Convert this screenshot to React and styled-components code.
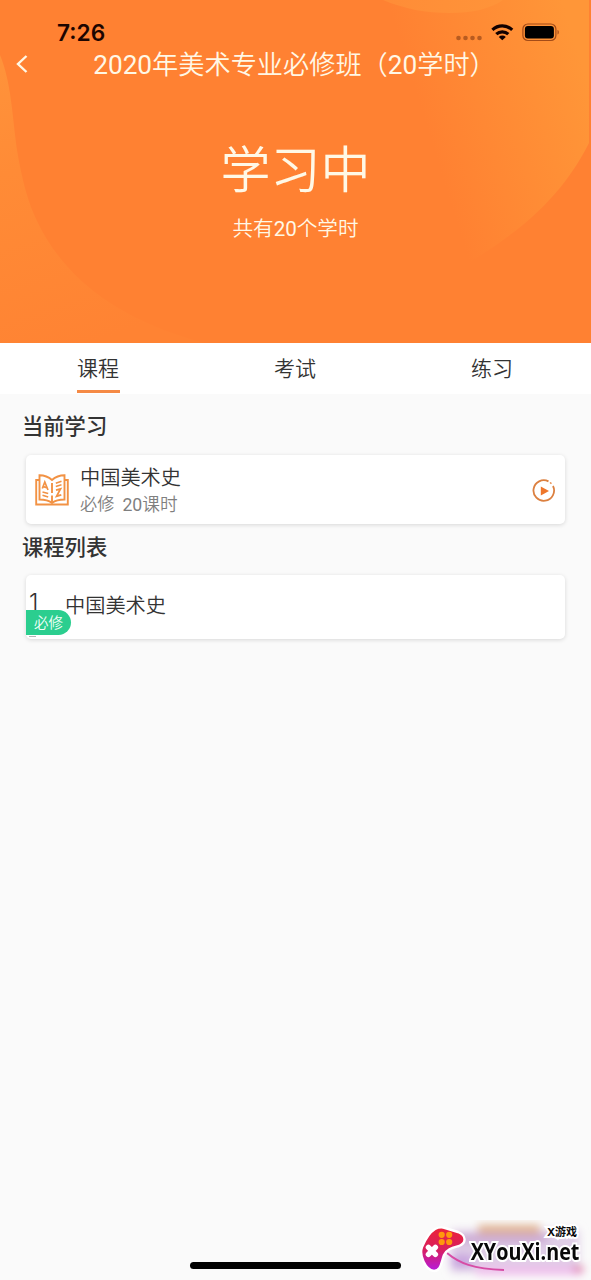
import React, { useState } from "react";
import styled, { createGlobalStyle } from "styled-components";

const GlobalStyle = createGlobalStyle`
  * {
    box-sizing: border-box;
  }

  body {
    margin: 0;
    background-color: #fafafa;
    color: #333;
    font-family: Roboto, "Noto Sans CJK SC", sans-serif;
    font-weight: 350;
  }
`;

const Screen = styled.div`
  position: relative;
  display: flex;
  flex-direction: column;
  height: 1280px;
  overflow: hidden;
`;

const Header = styled.header`
  position: relative;
  height: 343px;
  background-color: #ff8132;
  color: #fff8e6;
`;

const Waves = styled.svg`
  position: absolute;
  top: 0;
  left: 0;
`;

const HeaderContent = styled.div`
  position: relative;
  display: flex;
  flex-direction: column;
`;

const StatusBar = styled.div`
  display: flex;
  justify-content: space-between;
  height: 46px;
  padding: 18px 31px 0 57px;
  color: #1c0500;
`;

const Time = styled.span`
  font-family: Inter, sans-serif;
  font-size: 22.7px;
  font-weight: 600;
  line-height: 29px;
`;

const NavBar = styled.div`
  display: grid;
  grid-template-columns: 44px 1fr 46px;
  align-items: center;
  height: 38px;
`;

const BackButton = styled.button`
  display: flex;
  padding: 0 0 2px 15px;
  border: 0;
  background: none;
  color: inherit;
`;

const Title = styled.h1`
  margin: 0;
  font-size: 26.2px;
  font-weight: 350;
  line-height: 36px;
  text-align: center;
  white-space: nowrap;
`;

const Digits = styled.span`
  font-weight: 400;
`;

const Status = styled.div`
  margin-top: 51px;
  font-size: 50px;
  font-weight: 350;
  line-height: 72px;
  text-align: center;
`;

const Hours = styled.div`
  margin-top: 7px;
  font-size: 20.6px;
  line-height: 30px;
  text-align: center;
`;

const Tabs = styled.nav`
  display: flex;
  height: 51px;
  background-color: #fff;
`;

const Tab = styled.button`
  display: flex;
  flex: 1;
  flex-direction: column;
  align-items: center;
  padding: 10px 1px 0 0;
  border: 0;
  background: none;
  color: #333;
  font-family: inherit;
  font-size: 21px;
  font-weight: 350;
  line-height: 32px;

  &::after {
    content: "";
    width: 43px;
    height: 3px;
    margin-top: 5px;
    background-color: ${props => (props.$active ? "#f58a45" : "transparent")};
  }
`;

const Content = styled.main`
  padding: 17px 26px 0;
`;

const SectionTitle = styled.h2`
  margin: 0 0 0 -4px;
  font-size: 21.3px;
  font-weight: 500;
  line-height: 32px;
`;

const Card = styled.section`
  position: relative;
  display: flex;
  align-items: center;
  height: ${props => props.$height}px;
  margin: ${props => props.$margin};
  border-radius: 5px;
  background-color: #fff;
  box-shadow: 0 1px 4px rgba(0, 0, 0, 0.14);
`;

const BookIcon = styled.svg`
  margin-left: 9px;
`;

const CourseInfo = styled.div`
  flex: 1;
  margin-left: 11px;
  padding-top: 2px;
`;

const CourseName = styled.div`
  font-size: 20.2px;
  line-height: 28px;
`;

const CourseMeta = styled.div`
  display: flex;
  align-items: flex-end;
  gap: 8px;
  color: #7f7f7f;
  font-size: 17.7px;
  line-height: 26px;
`;

const Requirement = styled.span`
  padding-bottom: 2px;
  font-size: 17.2px;
  line-height: 24px;
`;

const PlayIcon = styled.svg`
  margin: 2px 9px 0 0;
`;

const IndexedName = styled.div`
  display: flex;
  align-items: center;
  padding-bottom: 3px;
`;

const Index = styled.span`
  width: 39px;
  padding: 0 0 5px 3px;
  font-family: Inter, sans-serif;
  font-size: 24px;
  font-weight: 300;
  line-height: 30px;
`;

const RequiredTag = styled.span`
  position: absolute;
  bottom: 4px;
  left: 0;
  width: 45px;
  height: 25px;
  padding-top: 1px;
  border-radius: 0 13px 13px 0;
  background-color: #2bce8f;
  color: #f0fff8;
  font-size: 14.5px;
  line-height: 25px;
  text-align: center;

  &::after {
    content: "";
    position: absolute;
    bottom: -2px;
    left: 3px;
    width: 7px;
    height: 1px;
    background-color: #b5b5b5;
  }
`;

const HomeIndicator = styled.div`
  position: absolute;
  bottom: 11px;
  left: 190px;
  width: 211px;
  height: 7px;
  border-radius: 4px;
  background-color: #000;
`;

const Watermark = styled.div`
  position: absolute;
  right: 0;
  bottom: 0;
  display: flex;
  flex-direction: column;
  align-items: flex-end;
  width: 175px;
  height: 60px;
  padding: 5px 12px 0 0;
`;

const WatermarkArt = styled.svg`
  position: absolute;
  top: 0;
  left: 0;
`;

const WatermarkText = styled.div`
  position: relative;
  padding-right: ${props => props.$indent}px;
  color: #080808;
  font-family: ${props => props.$font}, sans-serif;
  font-size: ${props => props.$size}px;
  font-weight: 700;
  line-height: ${props => props.$line}px;
  white-space: nowrap;
  transform: scaleX(${props => props.$stretch});
  transform-origin: right;
  -webkit-text-stroke: 4px #fff;
  paint-order: stroke fill;
`;

function HeaderWaves() {
  return (
    <Waves width="591" height="343" viewBox="0 0 591 343">
      <defs>
        <linearGradient id="right" x1="440" y1="170" x2="600" y2="120" gradientUnits="userSpaceOnUse">
          <stop offset="0" stopColor="#ff9638" stopOpacity="0" />
          <stop offset="1" stopColor="#ff9638" />
        </linearGradient>
        <linearGradient id="left" x1="0" y1="70" x2="90" y2="343" gradientUnits="userSpaceOnUse">
          <stop offset="0" stopColor="#ff923a" />
          <stop offset="0.35" stopColor="#ff8b36" />
          <stop offset="1" stopColor="#ff8333" />
        </linearGradient>
        <linearGradient id="top" x1="380" y1="0" x2="510" y2="0" gradientUnits="userSpaceOnUse">
          <stop offset="0" stopColor="#ff8c37" />
          <stop offset="1" stopColor="#ff9439" />
        </linearGradient>
      </defs>
      <path d="M370 0H589V143C565 190 520 250 370 310Z" fill="url(#right)" />
      <path d="M383 0C405 9 425 13 450 13C472 13 490 9 503 0Z" fill="url(#top)" />
      <path d="M0 55C11 82 12 112 17 150C22 180 28 203 38 223C62 272 110 318 205 343H0Z" fill="url(#left)" />
    </Waves>
  );
}

function StatusIcons() {
  return (
    <svg width="106" height="26" viewBox="0 0 106 26">
      <g fill="#b85b20">
        <circle cx="4.5" cy="20" r="2.3" />
        <circle cx="11.5" cy="20" r="2.3" />
        <circle cx="18.5" cy="20" r="2.3" />
        <circle cx="25.5" cy="20" r="2.3" />
      </g>
      <g fill="none" stroke="#100" strokeWidth="3.2">
        <path d="M38.4 11.9a14.4 14.4 0 0 1 19.8 0" />
        <path d="M42.3 16.2a8.7 8.7 0 0 1 12 0" />
      </g>
      <path d="M44.8 18.9a5 5 0 0 1 7 0l-3.5 3.4z" fill="#100" />
      <rect x="68.9" y="6" width="33" height="16.5" rx="5" fill="none" stroke="#a34b17" strokeWidth="1.2" />
      <rect x="70.9" y="8" width="29" height="12.5" rx="3" fill="#000" />
      <path d="M103.6 12c1.4.5 1.4 4 0 4.5z" fill="#8f3a10" />
    </svg>
  );
}

function Book() {
  return (
    <BookIcon width="34" height="32" viewBox="0 0 34 32" fill="none" stroke="#f29244" strokeWidth="1.9">
      <path d="M4.5 6H1.2V30.5H32.8V6H29.5" />
      <path d="M17 6C13.5 2.8 9 1.2 4.5 1.2V25.5C9.5 25.5 13.5 26.3 17 29C20.5 26.3 24.5 25.5 29.5 25.5V1.2C25 1.2 20.5 2.8 17 6Z" />
      <path d="M17 9V19M17 21.5V28" />
      <path d="M7.3 14.5L9.8 8L13 16M8.4 12.6L11.8 13.7" strokeWidth="1.7" />
      <path d="M7.5 18L13.2 19.5M7.5 21.2L13.2 22.9M20.8 9.3L26.5 7.2M20.8 12.6L26.5 10.8" strokeWidth="1.6" />
      <path d="M21 16.2L25.5 14.9L21.6 22.2L26.3 20.9" strokeWidth="1.8" />
    </BookIcon>
  );
}

function Play() {
  return (
    <PlayIcon width="24" height="24" viewBox="0 0 24 24">
      <path d="M16.5 2.4A10.3 10.3 0 1 0 21 7" fill="none" stroke="#dc8040" strokeWidth="1.8" />
      <path d="M18 3.5L19.5 4.7" stroke="#e78a48" strokeWidth="1.5" />
      <path d="M8.8 7.4L17 12L8.8 16.6Z" fill="#ee762b" />
    </PlayIcon>
  );
}

function SiteMark() {
  return (
    <Watermark>
      <WatermarkArt width="175" height="60" viewBox="0 0 175 60">
        <defs>
          <filter id="soft" x="-20%" y="-40%" width="140%" height="180%">
            <feGaussianBlur stdDeviation="4" />
          </filter>
          <linearGradient id="pad" x1="0" y1="0" x2="0" y2="1">
            <stop offset="0" stopColor="#ec2338" />
            <stop offset="0.5" stopColor="#d9205d" />
            <stop offset="1" stopColor="#b51be0" />
          </linearGradient>
        </defs>
        <g filter="url(#soft)">
          <rect x="35" y="10" width="128" height="42" fill="#dfcee6" />
          <rect x="62" y="5" width="62" height="9" fill="#dfb08e" />
          <rect x="42" y="15" width="90" height="8" fill="#c9a5d2" />
          <rect x="60" y="46" width="105" height="9" fill="#efbdec" />
          <rect x="35" y="34" width="22" height="14" fill="#c9a6df" />
          <rect x="158" y="46" width="9" height="6" fill="#dd6a9c" />
        </g>
        <path d="M31 33C43 43 57 49 88 50" fill="none" stroke="#d74ca5" strokeWidth="2" />
        <path
          d="M6 27C9 20 14 12 19 9C23 7 26 7 29 8L42 12C50 15 51 23 43 26C36 28 31 29 28 35C25 43 25 51 18 51C9 50 3 35 6 27Z"
          fill="url(#pad)"
          stroke="#fff"
          strokeWidth="2.4"
        />
        <g fill="#ff980d">
          <circle cx="25.7" cy="14.8" r="3.1" />
          <circle cx="33.2" cy="14.8" r="3.1" />
          <circle cx="25.7" cy="22" r="3.1" />
          <circle cx="33.2" cy="22" r="3.1" />
        </g>
        <path d="M12.4 27.4L19.4 34.4M19.4 27.4L12.4 34.4" stroke="#fff" strokeWidth="5.4" strokeLinecap="round" />
      </WatermarkArt>
      <WatermarkText $size={11} $line={14} $indent={2} $stretch={1} $font="Inter, 'Noto Sans CJK SC'">
        X游戏
      </WatermarkText>
      <WatermarkText $size={23.5} $line={24} $indent={0} $stretch={0.84} $font="'Open Sans'">
        XYouXi.net
      </WatermarkText>
    </Watermark>
  );
}

const tabs = ["课程", "考试", "练习"];

export default function App() {
  const [activeTab, setActiveTab] = useState("课程");

  return (
    <Screen>
      <GlobalStyle />
      <Header>
        <HeaderWaves />
        <HeaderContent>
          <StatusBar>
            <Time>7:26</Time>
            <StatusIcons />
          </StatusBar>
          <NavBar>
            <BackButton aria-label="返回">
              <svg width="14" height="20" viewBox="0 0 14 20">
                <path d="M11.5 2L3 10L11.5 18" fill="none" stroke="currentColor" strokeWidth="2.4" />
              </svg>
            </BackButton>
            <Title>
              <Digits>2020</Digits>年美术专业必修班（<Digits>20</Digits>学时）
            </Title>
          </NavBar>
          <Status>学习中</Status>
          <Hours>
            共有<Digits>20</Digits>个学时
          </Hours>
        </HeaderContent>
      </Header>

      <Tabs>
        {tabs.map(tab => (
          <Tab key={tab} $active={tab === activeTab} onClick={() => setActiveTab(tab)}>
            {tab}
          </Tab>
        ))}
      </Tabs>

      <Content>
        <SectionTitle>当前学习</SectionTitle>
        <Card $height={69} $margin="12px 0 8px">
          <Book />
          <CourseInfo>
            <CourseName>中国美术史</CourseName>
            <CourseMeta>
              <Requirement>必修</Requirement>
              <span>
                <Digits>20</Digits>课时
              </span>
            </CourseMeta>
          </CourseInfo>
          <Play />
        </Card>

        <SectionTitle>课程列表</SectionTitle>
        <Card $height={64} $margin="11px 0 0">
          <IndexedName>
            <Index>1</Index>
            <CourseName>中国美术史</CourseName>
          </IndexedName>
          <RequiredTag>必修</RequiredTag>
        </Card>
      </Content>

      <HomeIndicator />
      <SiteMark />
    </Screen>
  );
}
